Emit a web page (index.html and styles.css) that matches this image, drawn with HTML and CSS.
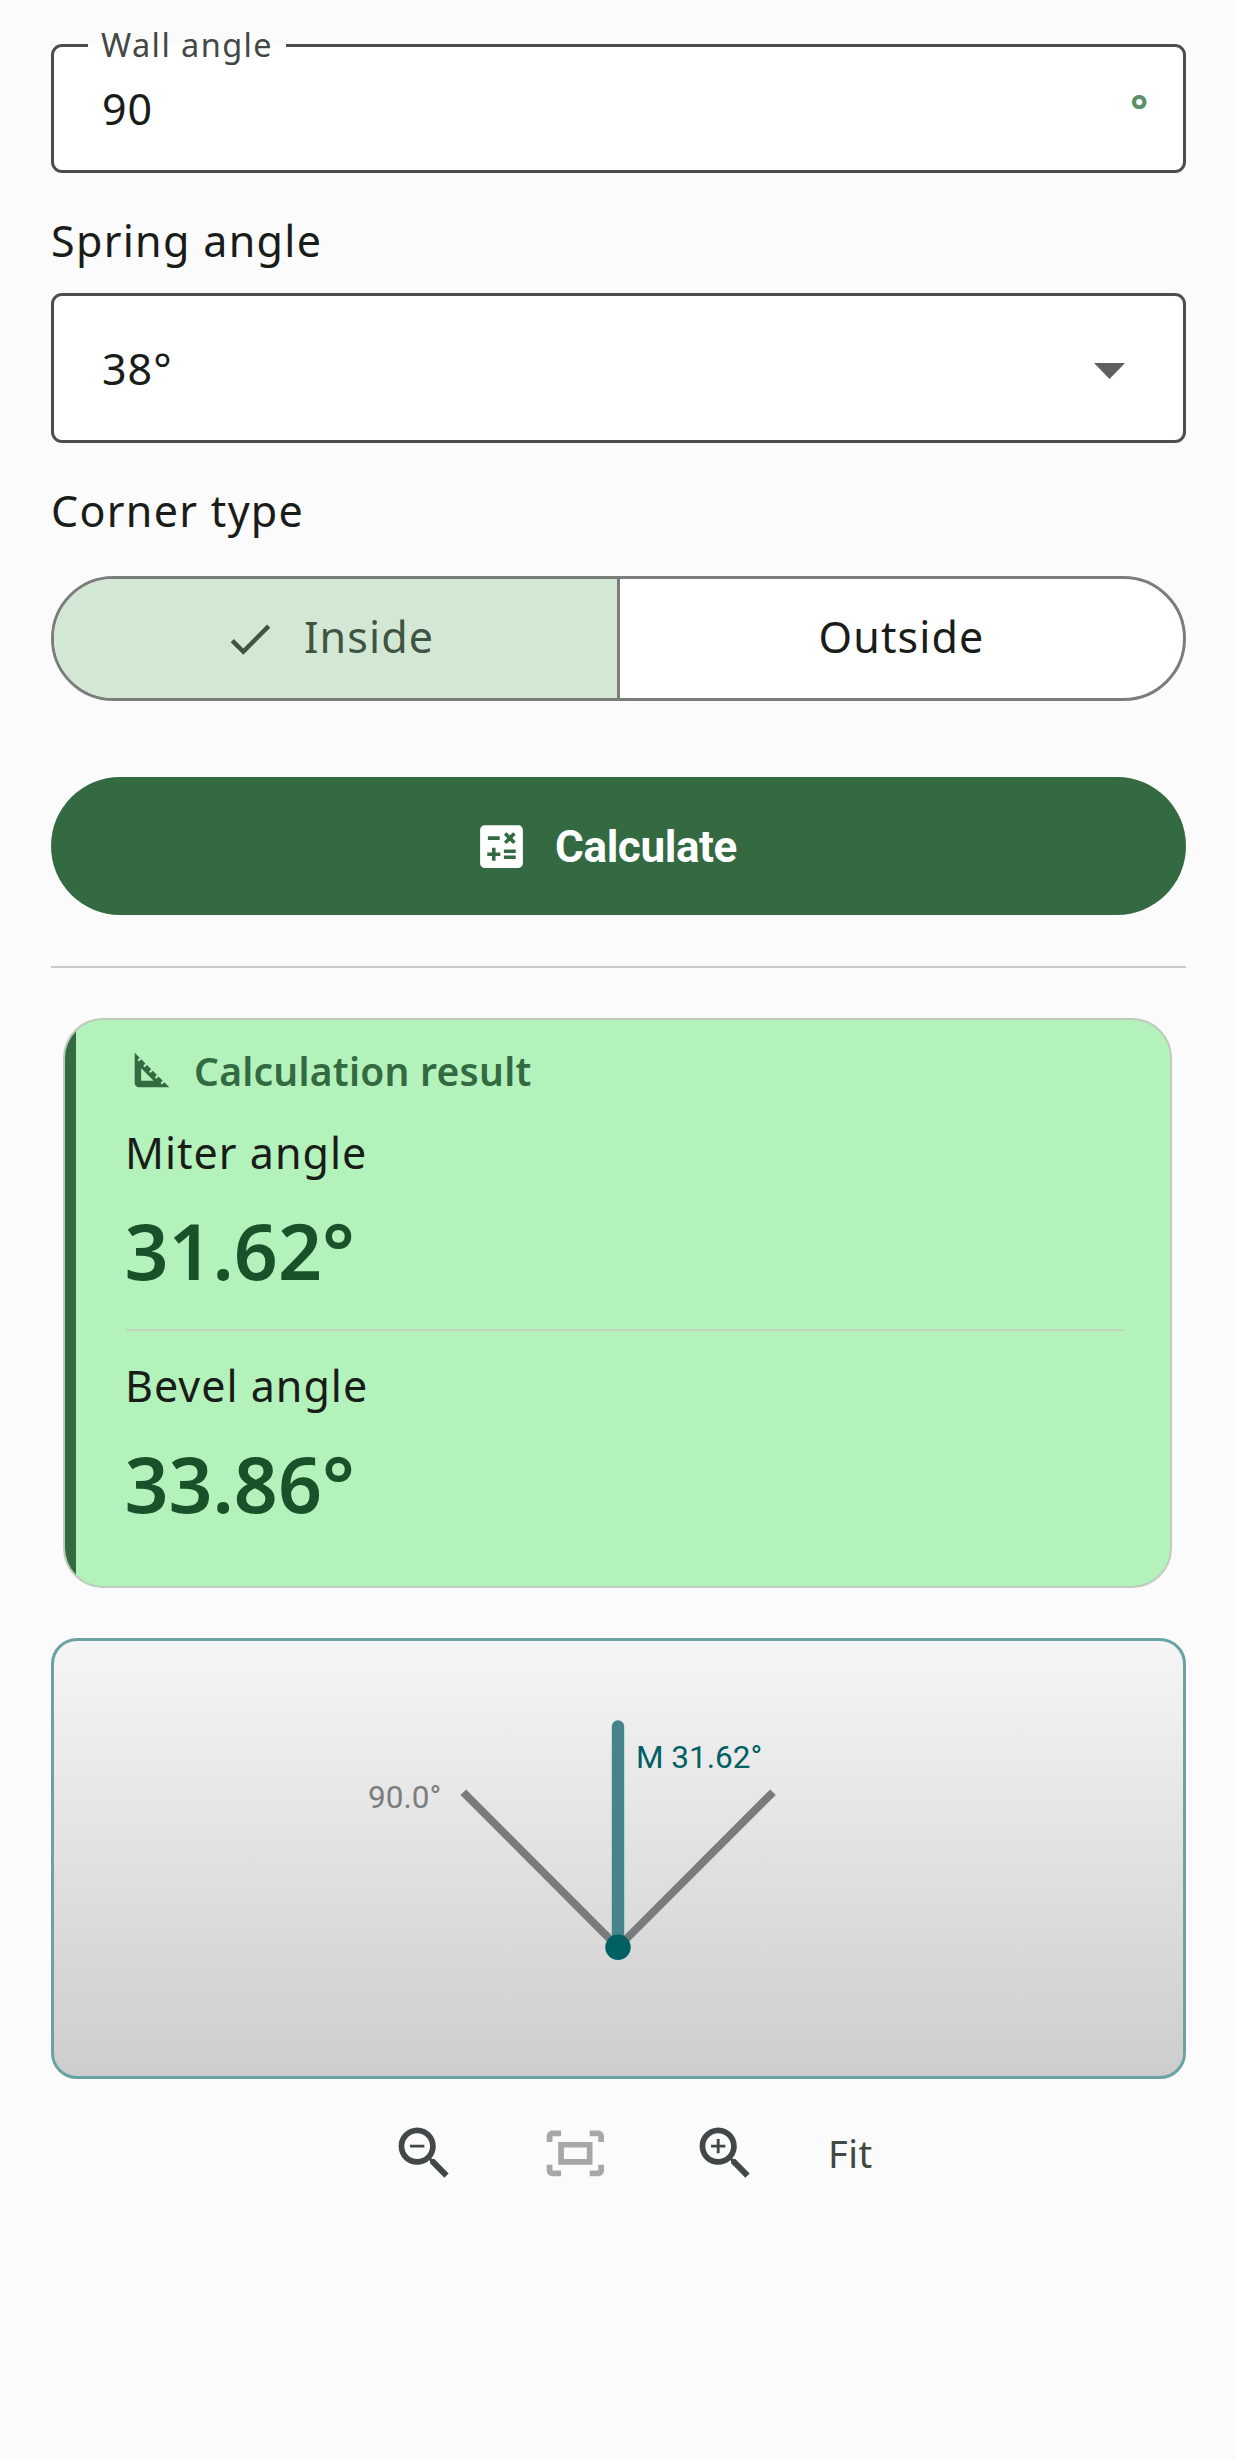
FILE: index.html
```html
<!DOCTYPE html>
<html lang="en">
<head>
<meta charset="utf-8">
<title>Miter and bevel calculator</title>
<link rel="stylesheet" href="styles.css">
</head>
<body>
<main class="page">
  <fieldset class="outlined">
    <legend class="outlined-label">Wall angle</legend>
    <div class="outlined-row">
      <span class="value">90</span>
      <span class="suffix">°</span>
    </div>
  </fieldset>

  <div class="section-label spring-label">Spring angle</div>
  <div class="select">
    <span class="value">38°</span>
    <svg class="select-arrow" viewBox="0 0 31 16" aria-hidden="true"><polygon points="0,0 31,0 15.5,16"/></svg>
  </div>

  <div class="section-label corner-label">Corner type</div>
  <div class="segments">
    <div class="segment segment-on">
      <svg class="check" viewBox="0 0 24 24" aria-hidden="true"><path d="M9 16.17L4.83 12l-1.42 1.41L9 19 21 7l-1.41-1.41z"/></svg>
      <span>Inside</span>
    </div>
    <div class="segment segment-off"><span>Outside</span></div>
  </div>

  <button class="calc" type="button">
    <svg class="calc-icon" viewBox="0 0 24 24" aria-hidden="true"><path d="M19 3H5c-1.1 0-2 .9-2 2v14c0 1.1.9 2 2 2h14c1.1 0 2-.9 2-2V5c0-1.1-.9-2-2-2zm-5.97 4.06L14.09 6l1.41 1.41L16.91 6l1.06 1.06-1.41 1.41 1.41 1.41-1.06 1.06-1.41-1.4-1.41 1.41-1.06-1.06 1.41-1.41-1.41-1.42zm-6.78.66h5v1.5h-5v-1.5zM11.5 16h-2v2H8v-2H6v-1.5h2v-2h1.5v2h2V16zm6.5 1.25h-5v-1.5h5v1.5zm0-2.5h-5v-1.5h5v1.5z"/></svg>
    <span class="calc-text">Calculate</span>
  </button>

  <hr class="rule">

  <section class="result">
    <div class="result-strip"></div>
    <div class="result-body">
      <div class="result-head">
        <svg class="foot" viewBox="0 0 24 24" aria-hidden="true"><path d="M17.66 17.66l-1.06 1.06-.71-.71 1.06-1.06-1.94-1.94-1.06 1.06-.71-.71 1.06-1.06-1.94-1.94-1.06 1.06-.71-.71 1.06-1.06L9.7 9.7l-1.06 1.06-.71-.71 1.06-1.06-1.94-1.94-1.06 1.06-.71-.71 1.06-1.06L4 4v14c0 1.1.9 2 2 2h14l-2.34-2.34zM7 17v-5.76L12.76 17H7z"/></svg>
        <span>Calculation result</span>
      </div>
      <div class="metric-name metric-first">Miter angle</div>
      <div class="metric-value">31.62°</div>
      <div class="metric-rule"></div>
      <div class="metric-name">Bevel angle</div>
      <div class="metric-value">33.86°</div>
    </div>
  </section>

  <div class="diagram">
    <svg class="diagram-svg" viewBox="0 -1.5 1130 435" aria-label="Corner diagram">
      <line class="wall" x1="409.3" y1="149.7" x2="564" y2="304.7"/>
      <line class="wall" x1="719" y1="149.7" x2="564" y2="304.7"/>
      <line class="miter" x1="564" y1="84" x2="564" y2="304.7"/>
      <circle class="pivot" cx="564" cy="304.7" r="12.7"/>
      <text class="label-miter" x="582" y="125">M 31.62°</text>
      <text class="label-wall" x="314" y="165">90.0°</text>
    </svg>
  </div>

  <div class="toolbar">
    <svg class="tool" viewBox="0 0 24 24" aria-hidden="true"><path d="M15.5 14h-.79l-.28-.27C15.41 12.59 16 11.11 16 9.5 16 5.91 13.09 3 9.5 3S3 5.91 3 9.5 5.91 16 9.5 16c1.61 0 3.09-.59 4.23-1.57l.27.28v.79l5 4.99L20.49 19l-4.99-5zm-6 0C7.01 14 5 11.99 5 9.5S7.01 5 9.5 5 14 7.01 14 9.5 11.99 14 9.5 14zM7 9h5v1H7z"/></svg>
    <svg class="tool tool-off" viewBox="0 0 24 24" aria-hidden="true"><path d="M17 4h3c1.1 0 2 .9 2 2v2h-2V6h-3V4zM4 8V6h3V4H4C2.9 4 2 4.9 2 6v2H4zM20 16v2h-3v2h3c1.1 0 2-.9 2-2v-2H20zM7 18H4v-2H2v2c0 1.1.9 2 2 2h3V18zM16 10v4H8v-4H16M18 8H6v8h12V8L18 8z"/></svg>
    <svg class="tool" viewBox="0 0 24 24" aria-hidden="true"><path d="M15.5 14h-.79l-.28-.27C15.41 12.59 16 11.11 16 9.5 16 5.91 13.09 3 9.5 3S3 5.91 3 9.5 5.91 16 9.5 16c1.61 0 3.09-.59 4.23-1.57l.27.28v.79l5 4.99L20.49 19l-4.99-5zm-6 0C7.01 14 5 11.99 5 9.5S7.01 5 9.5 5 14 7.01 14 9.5 11.99 14 9.5 14zM12 10h-2v2H9v-2H7V9h2V7h1v2h2v1z"/></svg>
    <span class="fit">Fit</span>
  </div>
</main>
</body>
</html>
```

FILE: styles.css
```css
* { box-sizing: border-box; }

html, body { margin: 0; padding: 0; }

body {
  background: #fbfbfb;
  color: #1a1c19;
  font-family: "Noto Sans", sans-serif;
  font-size: 43px;
  height: 2460px;
  overflow: hidden;
}

.page {
  width: 1186px;
  padding: 27px 0 0 51px;
}

.value { letter-spacing: 1px; }

/* Wall angle */
.outlined {
  margin: 0;
  padding: 0 35px 16px 48px;
  height: 146px;
  background: #fff;
  border: 3px solid #4a4e4c;
  border-radius: 11px;
  min-width: 0;
}

.outlined-label {
  margin-left: -14px;
  padding: 0 13px;
  font-size: 32.5px;
  line-height: 36px;
  letter-spacing: 1.4px;
  color: #434845;
}

.outlined-row {
  height: 91px;
  display: flex;
  justify-content: space-between;
  align-items: center;
}

.suffix {
  font-size: 42px;
  font-weight: 700;
  color: #5b8f68;
}

.section-label {
  line-height: 56px;
  letter-spacing: 1.3px;
}

.spring-label { margin-top: 40px; }
.corner-label { margin-top: 40px; }

/* Spring angle */
.select {
  margin-top: 24px;
  height: 150px;
  padding: 0 58px 0 48px;
  background: #fff;
  border: 3px solid #4a4e4c;
  border-radius: 11px;
  display: flex;
  align-items: center;
  justify-content: space-between;
}

.select-arrow {
  margin-top: 5px;
  width: 31px;
  height: 16px;
  fill: #5f5f5f;
}

/* Corner type */
.segments {
  margin-top: 37px;
  height: 125px;
  display: flex;
  background: #fff;
  border: 3px solid #7a7e7b;
  border-radius: 63px;
  overflow: hidden;
}

.segment {
  display: flex;
  align-items: center;
  justify-content: center;
  padding-bottom: 4px;
  letter-spacing: 1.1px;
}

.segment-on {
  flex: 0 0 563px;
  padding-right: 14px;
  gap: 27px;
  background: #d3e8d4;
  color: #3f5443;
}

.segment-off {
  flex: 1;
  border-left: 3px solid #7a7e7b;
}

.check {
  margin-top: 4px;
  width: 54px;
  height: 54px;
  fill: #3f5443;
}

/* Calculate */
.calc {
  margin-top: 76px;
  width: 100%;
  height: 138px;
  padding: 0 27px 0 0;
  border: 0;
  border-radius: 69px;
  background: #336a41;
  color: #fff;
  display: flex;
  align-items: center;
  justify-content: center;
  gap: 25px;
  font-family: Roboto, sans-serif;
  font-size: 44px;
  font-weight: 700;
  letter-spacing: -0.4px;
}

.calc-text { padding-top: 2px; }

.calc-icon {
  width: 57px;
  height: 57px;
  fill: #fff;
}

.rule {
  margin: 51px 0 0;
  height: 2px;
  border: 0;
  background: #c9cac7;
}

/* Result card */
.result {
  margin: 50px 14px 0 12px;
  display: flex;
  background: #b4f2bb;
  border: 2px solid #bfcabd;
  border-radius: 40px;
  overflow: hidden;
}

.result-strip {
  flex: 0 0 11px;
  background: #336a41;
}

.result-body {
  flex: 1;
  padding: 25px 47px 52px 50px;
}

.result-head {
  display: flex;
  align-items: center;
  gap: 16px;
  height: 50px;
  color: #336a41;
  font-size: 39px;
  font-weight: 600;
  letter-spacing: 0.26px;
}

.foot {
  flex: 0 0 52px;
  width: 52px;
  height: 52px;
  fill: #336a41;
}

.metric-name {
  margin: 26.5px 0 0 -1px;
  line-height: 56px;
  letter-spacing: 1px;
}

.metric-first { margin-top: 29.5px; }

.metric-value {
  margin: 20.5px 0 0 -1.5px;
  line-height: 100px;
  font-size: 77px;
  font-weight: 600;
  color: #19512a;
}

.metric-rule {
  margin-top: 28px;
  height: 2px;
  background: #c3d2c2;
}

/* Diagram */
.diagram {
  margin-top: 50px;
  height: 441px;
  border: 3px solid #6aa3a4;
  border-radius: 26px;
  overflow: hidden;
  background: linear-gradient(#f5f5f5, #cdcdcd);
}

.diagram-svg {
  display: block;
  width: 1130px;
  height: 435px;
}

.wall { stroke: #797b7c; stroke-width: 7.9; }
.miter { stroke: #458589; stroke-width: 12.4; stroke-linecap: round; }
.pivot { fill: #006064; }

.label-miter, .label-wall {
  font-family: Roboto, sans-serif;
  font-size: 31.5px;
}
.label-miter { fill: #006064; }
.label-wall { fill: #7a7c7d; }

/* Toolbar */
.toolbar {
  margin-top: 40px;
  padding-left: 339px;
  display: flex;
  align-items: center;
  gap: 82px;
}

.tool {
  flex: 0 0 auto;
  width: 68.7px;
  height: 68.7px;
  fill: #424749;
}

.tool-off { fill: #a6a8a5; }

.fit {
  margin-left: -14px;
  font-size: 38px;
  letter-spacing: 0.5px;
  color: #424940;
}
```
